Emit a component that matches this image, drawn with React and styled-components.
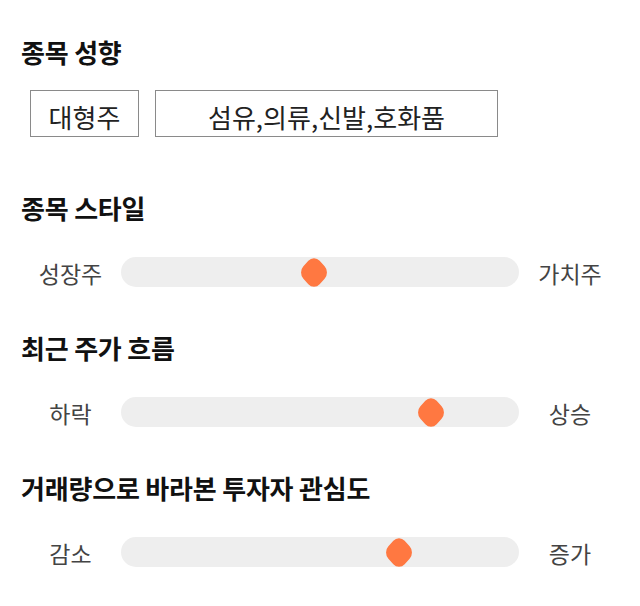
import React from "react";
import styled, { createGlobalStyle } from "styled-components";

const Global = createGlobalStyle`
  html, body { margin: 0; padding: 0; background: #ffffff; }
  body { font-family: "Noto Sans CJK KR", "Noto Sans", sans-serif; }
`;

const Page = styled.div`
  width: 640px;
  height: 606px;
  box-sizing: border-box;
  padding: 37px 0 0 20px;
  display: flex;
  flex-direction: column;
`;

const Section = styled.section`
  display: flex;
  flex-direction: column;
  gap: ${(p) => p.$gap}px;
  margin-bottom: ${(p) => p.$after}px;
`;

const Heading = styled.h2`
  margin: 0;
  padding-left: 1px;
  font-size: 26px;
  line-height: 30px;
  font-weight: 700;
  color: #111111;
  letter-spacing: -0.2px;
  white-space: nowrap;
`;

const TagRow = styled.div`
  display: flex;
  gap: 16px;
  padding-left: 10px;
`;

const Tag = styled.div`
  box-sizing: border-box;
  width: ${(p) => p.$w}px;
  height: 47px;
  border: 1px solid #8a8a8a;
  display: flex;
  align-items: center;
  justify-content: center;
  padding-top: 6px;
  font-size: 26px;
  line-height: 30px;
  color: #222222;
  white-space: nowrap;
`;

const SliderRow = styled.div`
  display: grid;
  grid-template-columns: 101px 398px 102px;
  align-items: center;
  height: 30px;
`;

const EndLabel = styled.span`
  text-align: center;
  font-size: 23px;
  color: #444444;
  line-height: 30px;
  padding-top: 2px;
  white-space: nowrap;
`;

const Track = styled.div`
  position: relative;
  height: 30px;
  background: #eeeeee;
  border-radius: 15px;
`;

const Thumb = styled.div`
  position: absolute;
  top: 0;
  width: 27px;
  height: 30px;
  transform: translateX(-50%);
  display: flex;
  align-items: center;
  justify-content: center;

  &::before {
    content: "";
    flex: none;
    width: 23px;
    height: 23px;
    background: #ff7841;
    border-radius: 8px;
    transform: scaleY(1.1) rotate(45deg);
  }
`;

function Slider({ left, right, value }) {
  const x = 13.5 + ((398 - 27) * value) / 100;
  return (
    <SliderRow>
      <EndLabel>{left}</EndLabel>
      <Track>
        <Thumb style={{ left: `${x}px` }} />
      </Track>
      <EndLabel>{right}</EndLabel>
    </SliderRow>
  );
}

export default function App() {
  return (
    <>
      <Global />
      <Page>
        <Section $gap={23} $after={56}>
          <Heading>종목 성향</Heading>
          <TagRow>
            <Tag $w={109}>대형주</Tag>
            <Tag $w={343}>섬유,의류,신발,호화품</Tag>
          </TagRow>
        </Section>
        <Section $gap={33} $after={47}>
          <Heading>종목 스타일</Heading>
          <Slider left="성장주" right="가치주" value={48.4} />
        </Section>
        <Section $gap={33} $after={47}>
          <Heading>최근 주가 흐름</Heading>
          <Slider left="하락" right="상승" value={79.8} />
        </Section>
        <Section $gap={33} $after={0}>
          <Heading>거래량으로 바라본 투자자 관심도</Heading>
          <Slider left="감소" right="증가" value={71.3} />
        </Section>
      </Page>
    </>
  );
}
